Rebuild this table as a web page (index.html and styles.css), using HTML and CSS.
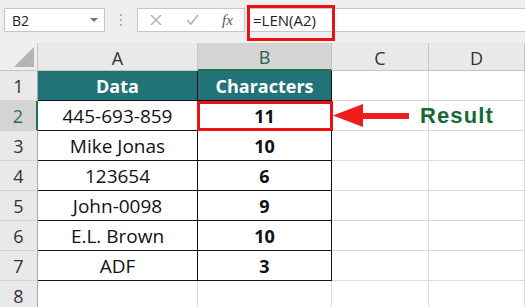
FILE: index.html
```html
<!DOCTYPE html>
<html lang="en">

<head>
    <meta charset="UTF-8">
    <title>LEN function</title>
    <meta name="viewport" content="width=device-width, initial-scale=1">
    <link rel="stylesheet" href="styles.css">
</head>

<body>
    <div class="toolbar">
        <div class="namebox">
            <span>B2</span>
            <span class="caret"></span>
        </div>
        <div class="grip">
            <svg width="4" height="14" viewBox="0 0 4 14">
                <rect x="1" y="1" width="2" height="2" fill="#b0b0b0" />
                <rect x="1" y="6" width="2" height="2" fill="#b0b0b0" />
                <rect x="1" y="11" width="2" height="2" fill="#b0b0b0" />
            </svg>
        </div>
        <div class="fxbtns">
            <svg class="btn" width="12" height="12" viewBox="0 0 12 12">
                <path d="M1 1 L11 11 M11 1 L1 11" stroke="#b3b3b3" stroke-width="1.6" fill="none" />
            </svg>
            <svg class="btn" width="13" height="12" viewBox="0 0 13 12">
                <path d="M1 6 L5 10 L12 1" stroke="#b3b3b3" stroke-width="1.6" fill="none" />
            </svg>
            <span class="fx">fx</span>
        </div>
        <div class="formula">
            <span class="formula-text">=LEN(A2)</span>
        </div>
    </div>

    <div class="sheet">
        <div class="corner"><span class="tri"></span></div>
        <div class="colhead">A</div>
        <div class="colhead sel">B</div>
        <div class="colhead">C</div>
        <div class="colhead">D</div>

        <div class="rowhead">1</div>
        <div class="cell t hd">Data</div>
        <div class="cell t hd">Characters</div>
        <div class="cell"></div>
        <div class="cell"></div>

        <div class="rowhead sel">2</div>
        <div class="cell t">445-693-859</div>
        <div class="cell t num active">11</div>
        <div class="cell"></div>
        <div class="cell"></div>

        <div class="rowhead">3</div>
        <div class="cell t">Mike Jonas</div>
        <div class="cell t num">10</div>
        <div class="cell"></div>
        <div class="cell"></div>

        <div class="rowhead">4</div>
        <div class="cell t">123654</div>
        <div class="cell t num">6</div>
        <div class="cell"></div>
        <div class="cell"></div>

        <div class="rowhead">5</div>
        <div class="cell t">John-0098</div>
        <div class="cell t num">9</div>
        <div class="cell"></div>
        <div class="cell"></div>

        <div class="rowhead">6</div>
        <div class="cell t">E.L. Brown</div>
        <div class="cell t num">10</div>
        <div class="cell"></div>
        <div class="cell"></div>

        <div class="rowhead">7</div>
        <div class="cell t">ADF</div>
        <div class="cell t num">3</div>
        <div class="cell"></div>
        <div class="cell"></div>

        <div class="rowhead">8</div>
        <div class="cell"></div>
        <div class="cell"></div>
        <div class="cell"></div>
        <div class="cell"></div>

        <!-- arrow pointing at the result cell -->
        <div class="callout">
            <svg width="76" height="26" viewBox="0 0 76 26">
                <polygon points="0,12.5 30,1 30,24" fill="#ee1c1c" />
                <rect x="29" y="10" width="47" height="6" fill="#ee1c1c" />
            </svg>
            <span class="result">Result</span>
        </div>
    </div>
</body>

</html>
```

FILE: styles.css
```css
* {
    box-sizing: border-box;
}

body {
    margin: 0;
    background: #efefef;
    font-family: "Open Sans", "Noto Sans", sans-serif;
    overflow: hidden;
    height: 307px;
}

/* formula bar */
.toolbar {
    display: flex;
    align-items: flex-start;
    height: 43px;
    padding-top: 8px;
}

.namebox {
    margin-left: 4px;
    width: 101px;
    height: 24px;
    background: white;
    border: 1px solid #c6c6c6;
    display: flex;
    align-items: center;
    justify-content: space-between;
    padding: 0 6px 0 7px;
    font-size: 14px;
    color: #222;
}

.caret {
    width: 0;
    height: 0;
    border-left: 4px solid transparent;
    border-right: 4px solid transparent;
    border-top: 4px solid #777;
}

.grip {
    width: 32px;
    height: 24px;
    display: flex;
    align-items: center;
    justify-content: center;
}

.fxbtns {
    width: 108px;
    height: 24px;
    background: white;
    border: 1px solid #c6c6c6;
    display: flex;
    align-items: center;
    padding-left: 12px;
    gap: 24px;
}

.fx {
    font-family: "Liberation Serif", serif;
    font-style: italic;
    font-size: 15px;
    color: #555;
    margin-left: -1px;
}

.formula {
    flex: 1;
    margin-left: 3px;
    height: 24px;
    background: white;
    border: 1px solid #c6c6c6;
    border-right: none;
    position: relative;
    display: flex;
    align-items: center;
    padding-left: 4px;
}

.formula-text {
    font-size: 15px;
    color: #222;
}

.formula::after {
    content: "";
    position: absolute;
    left: -2px;
    top: -4px;
    width: 82px;
    height: 30px;
    border: 3px solid #ee1111;
}

/* grid */
.sheet {
    position: relative;
    display: grid;
    grid-template-columns: 38px 160px 134px 97px 96px;
    grid-template-rows: 28px repeat(8, 30px);
    background: white;
}

.corner,
.colhead,
.rowhead {
    background: #e9e9e9;
    color: #333;
    font-size: 18px;
    display: flex;
    align-items: center;
    justify-content: center;
    border-right: 1px solid #c4c4c4;
    border-bottom: 1px solid #c4c4c4;
}

.corner {
    position: relative;
    background: #efefef;
}

.tri {
    position: absolute;
    right: 3px;
    bottom: 3px;
    width: 0;
    height: 0;
    border-left: 20px solid transparent;
    border-bottom: 20px solid #b5b5b5;
}

.colhead {
    padding-top: 2px;
}

.colhead.sel {
    background: #d4d4d4;
    color: #2f5f45;
    border-bottom: 2px solid #217346;
}

.rowhead {
    border-bottom-color: #d4d4d4;
    border-right-color: #a8a8a8;
}

.rowhead.sel {
    background: #d4d4d4;
    color: #217346;
    border-right: 2px solid #217346;
}

.cell {
    border-right: 1px solid #dadada;
    border-bottom: 1px solid #dadada;
    display: flex;
    align-items: center;
    justify-content: center;
    font-size: 19px;
    color: #111;
}

.cell.t {
    border-right-color: #111;
    border-bottom-color: #111;
}

.cell.hd {
    background: #227377;
    color: white;
    font-weight: bold;
    font-size: 18px;
}

.num {
    font-weight: bold;
    font-size: 18px;
}

.active {
    position: relative;
}

.active::after {
    content: "";
    position: absolute;
    top: 0;
    left: -1px;
    right: -2px;
    bottom: -1px;
    border: 3px solid #ee1111;
}

.callout {
    position: absolute;
    left: 333px;
    top: 60px;
    height: 26px;
    display: flex;
    align-items: center;
    gap: 11px;
}

.result {
    font-family: "Liberation Sans", Arial, sans-serif;
    font-weight: bold;
    font-size: 22px;
    letter-spacing: 1.1px;
    color: #17693a;
}
```
